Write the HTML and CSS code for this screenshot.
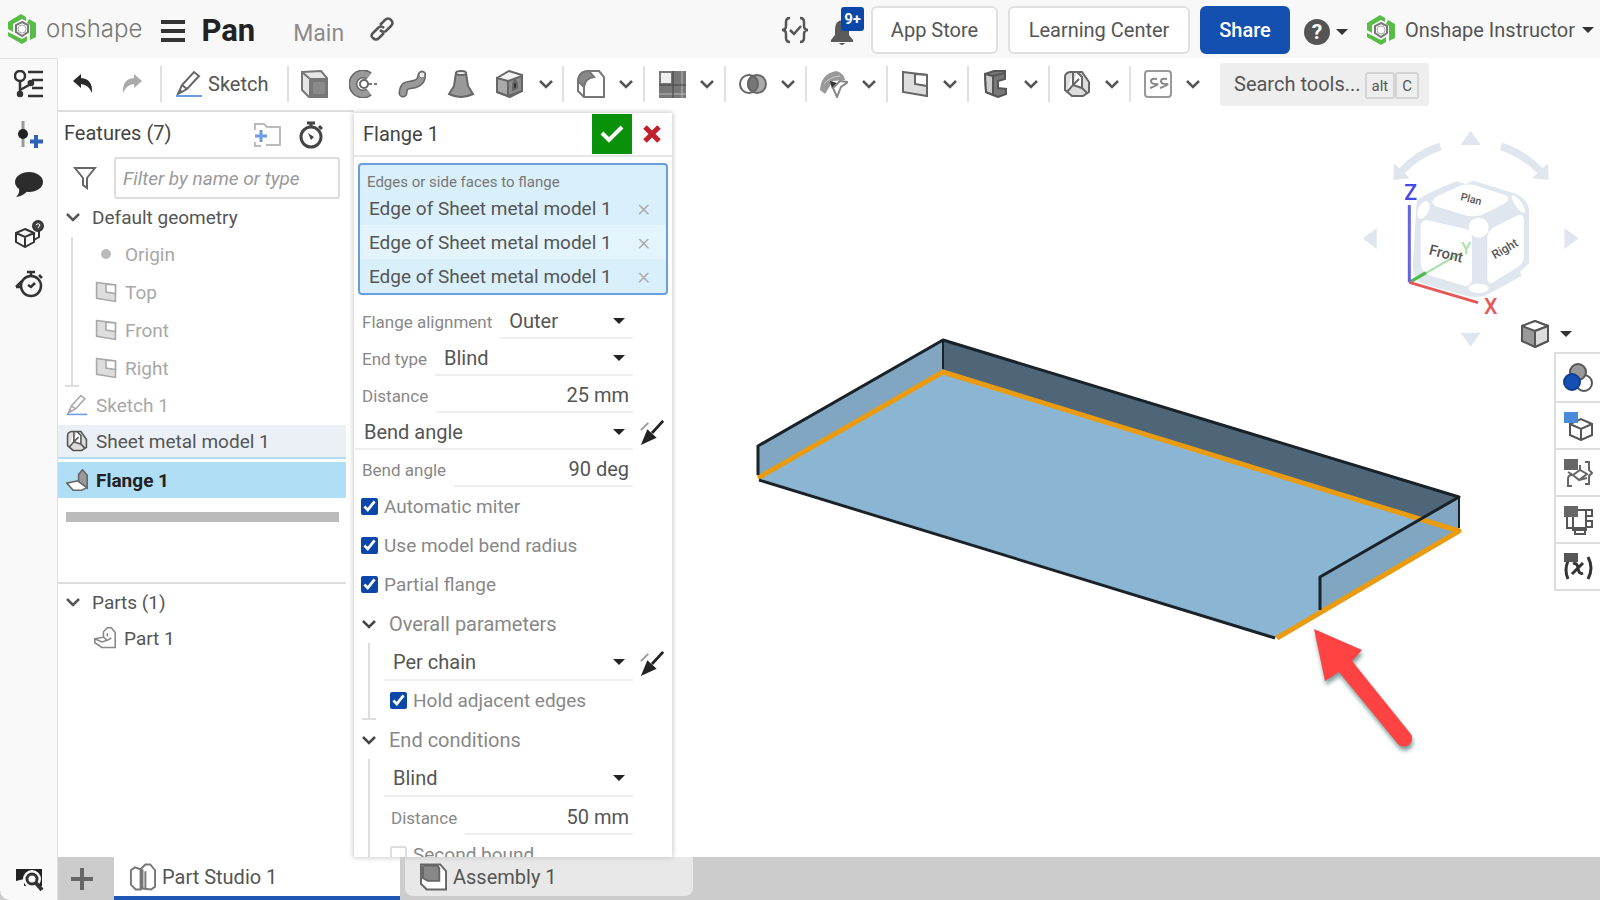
FILE: index.html
```html
<!DOCTYPE html>
<html lang="en">
	<head>
		<meta charset="utf-8">
		<title>Pan - Onshape</title>
		<link rel="stylesheet" href="styles.css">
	</head>
	<body>
		<!--shared icons-->
		<svg class="defs" width="0" height="0">
			<symbol id="logo" viewBox="0 0 28 30">
				<path d="M0 8L13 0L18 3V7L14 5L5 10V18L0 15Z M21 5L28 9V23L22 26V11L19 9Z M0 18L14 25L19 22V27L14 30L0 22Z" fill="#58bd47"/>
				<path d="M14 8L20 11V18L14 22L8 18V11Z" fill="#fff" stroke="#777" stroke-width="2"/>
				<circle cx="14" cy="15" r="4" fill="#fff" stroke="#aaa" stroke-width="1"/>
			</symbol>
			<symbol id="chevron" viewBox="0 0 16 10">
				<path d="M2 2L8 8L14 2" fill="none" stroke="currentColor" stroke-width="2.500"/>
			</symbol>
			<symbol id="plane" viewBox="0 0 28 28">
				<path d="M2 2L26 5V26L2 22Z" fill="#ddd" stroke="currentColor" stroke-width="2"/>
				<path d="M14 4V14L26 16V5Z" fill="#fff" stroke="currentColor" stroke-width="2"/>
			</symbol>
			<symbol id="pencil" viewBox="0 0 28 28">
				<path d="M3 24L7 15L19 2L24 6L12 19Z M7 15L12 19" fill="#fff" stroke="currentColor" stroke-width="2"/>
				<path d="M3 24L5 19L8 22Z" fill="currentColor"/>
				<path d="M1 26H27" stroke="#6c9be0" stroke-width="2"/>
			</symbol>
			<symbol id="sheet" viewBox="0 0 28 28">
				<path d="M2 7Q2 3 7 2L19 2L26 12V22L20 26H9L2 20Z" fill="#ddd" stroke="currentColor" stroke-width="2"/>
				<path d="M10 2V15L4 22M10 15L19 18V7L14 2M19 18L24 23M10 15L16 9" fill="#fff" stroke="currentColor" stroke-width="2"/>
			</symbol>
			<symbol id="stopwatch" viewBox="0 0 26 28">
				<circle cx="13" cy="16" r="10" fill="none" stroke="currentColor" stroke-width="3"/>
				<path d="M9 2H17M13 2V6M21 5L24 8" stroke="currentColor" stroke-width="3"/>
				<path d="M10 12L16 16L13 19Z" fill="currentColor"/>
			</symbol>
			<symbol id="flip" viewBox="0 0 28 28">
				<path d="M26 1L14 14" stroke="#222" stroke-width="3"/>
				<path d="M2 11L10 3" stroke="#999" stroke-width="2"/>
				<path d="M2 27L9 10L19 19Z" fill="#222"/>
			</symbol>
		</svg>

		<!--top bar-->
		<header class="topbar">
			<a href="#" class="brand"><svg class="logo"><use href="#logo"/></svg><span>onshape</span></a>
			<button type="button" class="plain menu" aria-label="Menu"><i></i><i></i><i></i></button>
			<h1>Pan</h1>
			<a href="#" class="branch">Main</a>
			<button type="button" class="plain" aria-label="Copy link">
				<svg width="24" height="24" viewBox="0 0 24 24" fill="none" stroke="#555" stroke-width="2.500"><path d="M10 8L15 3Q18 0 21 3Q24 6 21 9L16 14Q13 16 10 13M14 11Q11 8 8 11L3 16Q0 19 3 21Q6 24 9 21L14 16"/></svg>
			</button>
			<div class="account">
				<button type="button" class="plain" aria-label="Versions">
					<svg width="28" height="28" viewBox="0 0 28 28" fill="none" stroke="#555" stroke-width="2.500"><path d="M9 2Q5 2 5 6V10Q5 14 1 14Q5 14 5 18V22Q5 26 9 26M19 2Q23 2 23 6V10Q23 14 27 14Q23 14 23 18V22Q23 26 19 26M9 14L13 18L20 10"/></svg>
				</button>
				<button type="button" class="plain bell" aria-label="Notifications">
					<svg width="24" height="26" viewBox="0 0 24 26" fill="#5a5a5a"><path d="M12 1Q19 2 19 10V16L23 21V23H1V21L5 16V10Q5 2 12 1Z M9 24H15Q12 28 9 24Z"/></svg>
					<span class="badge">9+</span>
				</button>
				<button type="button" class="btn store">App Store</button>
				<button type="button" class="btn learn">Learning Center</button>
				<button type="button" class="btn share">Share</button>
				<button type="button" class="plain help" aria-label="Help"><span>?</span><i class="caret"></i></button>
				<button type="button" class="plain user"><svg class="logo"><use href="#logo"/></svg>Onshape Instructor<i class="caret"></i></button>
			</div>
		</header>

		<div class="app">
			<!--left rail-->
			<nav class="rail">
				<button type="button" class="plain" aria-label="Feature list">
					<svg width="30" height="28" viewBox="0 0 30 28" fill="none" stroke="#333" stroke-width="2.500"><circle cx="6" cy="6" r="5"/><path d="M6 11V25M6 20L15 15V11M14 2H29M18 10H29M18 18H29M14 26H29"/><circle cx="6" cy="24" r="2" fill="#333"/><circle cx="17" cy="13" r="2" fill="#333"/></svg>
				</button>
				<button type="button" class="plain" aria-label="Add part">
					<svg width="30" height="28" viewBox="0 0 30 28"><path d="M9 1V27" stroke="#999" stroke-width="3"/><circle cx="9" cy="14" r="5" fill="#222"/><path d="M22 15V28M16 21.500H29" stroke="#2d63bd" stroke-width="4"/></svg>
				</button>
				<button type="button" class="plain" aria-label="Comments">
					<svg width="30" height="28" viewBox="0 0 30 28" fill="#2c2c2c"><ellipse cx="15" cy="12" rx="14" ry="10"/><path d="M5 18Q6 24 2 27Q10 26 14 20Z"/></svg>
				</button>
				<button type="button" class="plain" aria-label="Explode">
					<svg width="30" height="28" viewBox="0 0 30 28" fill="none" stroke="#333" stroke-width="2"><path d="M11 9L20 13V22L11 27L2 22V13Z M2 13L11 17L20 13M11 17V27M20 20L25 17V10"/><circle cx="24" cy="6" r="5" fill="#444"/><path d="M22 5Q24 2 26 5L24 8" stroke="#fff" stroke-width="1"/></svg>
				</button>
				<button type="button" class="plain" aria-label="History">
					<svg width="30" height="28" viewBox="0 0 30 28" fill="none" stroke="#333" stroke-width="2.500"><circle cx="17" cy="16" r="10"/><path d="M13 2H21M17 2V6M25 5L28 8M14 15L17 17L21 13M2 17L8 11M2 17H8"/></svg>
				</button>
				<button type="button" class="plain last" aria-label="Search tabs">
					<svg width="30" height="28" viewBox="0 0 30 28"><path d="M2 5H28V22H2Z" fill="#222"/><circle cx="18" cy="15" r="9" fill="#f9f9f9"/><path d="M2 17L10 15V24H1Z" fill="#f9f9f9"/><circle cx="18" cy="15" r="5" fill="#fff" stroke="#333" stroke-width="3"/><path d="M22 19L28 26" stroke="#333" stroke-width="4"/></svg>
				</button>
			</nav>

			<main class="main">
				<!--toolbar-->
				<div class="toolbar">
					<div class="tools history">
						<button type="button" class="plain" aria-label="Undo"><svg width="22" height="22" viewBox="0 0 22 22"><path d="M1 8L9 1V5Q21 6 20 20Q17 12 9 11V15Z" fill="#2a2a2a"/></svg></button>
						<button type="button" class="plain" aria-label="Redo"><svg width="22" height="22" viewBox="0 0 22 22"><path d="M21 8L13 1V5Q1 6 2 20Q5 12 13 11V15Z" fill="#aaa"/></svg></button>
					</div>
					<div class="tools sketch">
						<button type="button" class="plain"><svg><use href="#pencil"/></svg>Sketch</button>
					</div>
					<div class="tools solids">
						<button type="button" class="plain" aria-label="Extrude"><svg viewBox="0 0 28 28" stroke="#777" stroke-width="2"><path d="M2 2L21 1L27 8V27H9L2 20Z" fill="#e6e6e6"/><path d="M2 2L10 9V27M10 9H27" fill="none"/><path d="M12 11H26V25H12Z" fill="#8a8a8a"/></svg></button>
						<button type="button" class="plain" aria-label="Revolve"><svg viewBox="0 0 28 28"><path d="M20 6A10 10 0 1 0 20 22" fill="none" stroke="#666" stroke-width="9"/><path d="M20 6A10 10 0 1 0 20 22" fill="none" stroke="#999" stroke-width="6"/><path d="M18 14H28" stroke="#777" stroke-width="2" stroke-dasharray="5 2"/><circle cx="15" cy="14" r="4" fill="#fff" stroke="#666" stroke-width="2"/></svg></button>
						<button type="button" class="plain" aria-label="Sweep"><svg viewBox="0 0 28 28" fill="none" stroke-linecap="round"><path d="M5 23C6 13 11 16 17 14S23 9 24 5" stroke="#666" stroke-width="9"/><path d="M5 23C6 13 11 16 17 14S23 9 24 5" stroke="#999" stroke-width="6"/><circle cx="24" cy="5" r="3" fill="#eee" stroke="#777"/></svg></button>
						<button type="button" class="plain" aria-label="Loft"><svg viewBox="0 0 28 28" stroke="#666" stroke-width="2"><path d="M9 3L7 16L2 24Q14 30 26 24L21 16L19 3Z" fill="#999"/><ellipse cx="14" cy="3" rx="5" ry="2" fill="#eee"/></svg></button>
						<button type="button" class="plain" aria-label="Shell"><svg viewBox="0 0 28 28" stroke="#666" stroke-width="2"><path d="M1 8L13 1L26 5V21L14 27L1 22Z" fill="#f4f4f4"/><path d="M1 8L12 11V26L1 22Z" fill="#aaa"/><path d="M12 11L26 6V21L12 26Z" fill="#8c8c8c"/><path d="M17 20V14L19 10L21 14V18Z" fill="#333"/></svg></button>
						<button type="button" class="plain" aria-label="More solid tools"><svg class="chev"><use href="#chevron"/></svg></button>
					</div>
					<div class="tools">
						<button type="button" class="plain" aria-label="Fillet"><svg viewBox="0 0 28 28" stroke="#777" stroke-width="2"><path d="M1 11Q2 1 12 1H22L27 7V27H7L1 21Z" fill="#fff"/><path d="M1 11Q2 1 12 1L17 7Q8 8 7 17Z" fill="#888"/><path d="M7 17V27" fill="none"/></svg></button>
						<button type="button" class="plain" aria-label="More fillet tools"><svg class="chev"><use href="#chevron"/></svg></button>
					</div>
					<div class="tools">
						<button type="button" class="plain" aria-label="Pattern"><svg viewBox="0 0 28 28"><path d="M1 1H28V28H1Z" fill="#777"/><path d="M3 3H13V13H3Z" fill="#eee"/><path d="M1 24H28M24 1V28" stroke="#bbb" stroke-width="1"/><path d="M15 1V28M1 15H28" stroke="#444" stroke-width="1"/></svg></button>
						<button type="button" class="plain" aria-label="More pattern tools"><svg class="chev"><use href="#chevron"/></svg></button>
					</div>
					<div class="tools">
						<button type="button" class="plain" aria-label="Boolean"><svg viewBox="0 0 28 28" stroke="#666" stroke-width="2"><circle cx="10" cy="14" r="9" fill="#fff"/><circle cx="18" cy="14" r="9" fill="#aaa"/><path d="M14 6A9 9 0 0 1 14 22A9 9 0 0 1 14 6Z" fill="#777"/></svg></button>
						<button type="button" class="plain" aria-label="More boolean tools"><svg class="chev"><use href="#chevron"/></svg></button>
					</div>
					<div class="tools">
						<button type="button" class="plain" aria-label="Surface"><svg viewBox="0 0 28 28"><path d="M0 20Q1 4 16 1Q24 3 25 10L13 11L5 24Z" fill="#999"/><path d="M4 14Q9 7 20 6" fill="none" stroke="#ccc"/><path d="M10 11L17 13L12 19Z" fill="#333"/><path d="M13 18L20 11L28 12L21 17L17 27Z" fill="#fff" stroke="#888" stroke-width="2"/></svg></button>
						<button type="button" class="plain" aria-label="More surface tools"><svg class="chev"><use href="#chevron"/></svg></button>
					</div>
					<div class="tools">
						<button type="button" class="plain" aria-label="Plane"><svg><use href="#plane"/></svg></button>
						<button type="button" class="plain" aria-label="More plane tools"><svg class="chev"><use href="#chevron"/></svg></button>
					</div>
					<div class="tools">
						<button type="button" class="plain" aria-label="Frame"><svg viewBox="0 0 28 28" stroke="#555" stroke-width="2"><path d="M3 4L12 1H23V9L16 11V18L24 19V24L16 27L4 22Z" fill="#777"/><path d="M3 4L11 6V25L4 22Z" fill="#ccc"/><path d="M11 6L23 3" fill="none"/></svg></button>
						<button type="button" class="plain" aria-label="More frame tools"><svg class="chev"><use href="#chevron"/></svg></button>
					</div>
					<div class="tools">
						<button type="button" class="plain" aria-label="Sheet metal"><svg><use href="#sheet"/></svg></button>
						<button type="button" class="plain" aria-label="More sheet metal tools"><svg class="chev"><use href="#chevron"/></svg></button>
					</div>
					<div class="tools">
						<button type="button" class="plain" aria-label="Custom features"><svg viewBox="0 0 28 28" fill="none" stroke="#999" stroke-width="2"><rect x="1" y="1" width="26" height="26" rx="3"/><path d="M13 9Q7 8 7 11T12 14T6 18M23 9Q17 8 17 11T22 14T16 18" stroke="#888"/></svg></button>
						<button type="button" class="plain" aria-label="More custom features"><svg class="chev"><use href="#chevron"/></svg></button>
					</div>
					<button type="button" class="search">Search tools... <kbd>alt</kbd><kbd>C</kbd></button>
				</div>

				<div class="workspace">
					<!--feature list-->
					<section class="features">
						<div class="panel-head">
							<h2>Features (7)</h2>
							<button type="button" class="plain" aria-label="Add folder"><svg width="28" height="26" viewBox="0 0 28 26" fill="none"><path d="M2 8V2H11L14 5H27V23H13M2 20V24H8" stroke="#bbb" stroke-width="2"/><path d="M8 8V20M2 14H14" stroke="#6c9be0" stroke-width="3"/></svg></button>
							<button type="button" class="plain" aria-label="Timing"><svg width="26" height="28"><use href="#stopwatch"/></svg></button>
						</div>
						<div class="filter">
							<svg width="24" height="24" viewBox="0 0 24 24" fill="none" stroke="#666" stroke-width="2"><path d="M2 2H22L14 12V22L10 19V12Z"/></svg>
							<input type="text" aria-label="Filter features" placeholder="Filter by name or type">
						</div>
						<div class="row group"><svg class="chev"><use href="#chevron"/></svg>Default geometry</div>
						<ul class="tree">
							<li class="row"><i class="dot"></i>Origin</li>
							<li class="row"><svg><use href="#plane"/></svg>Top</li>
							<li class="row"><svg><use href="#plane"/></svg>Front</li>
							<li class="row"><svg><use href="#plane"/></svg>Right</li>
						</ul>
						<div class="row item muted"><svg><use href="#pencil"/></svg>Sketch 1</div>
						<div class="row item parent"><svg><use href="#sheet"/></svg>Sheet metal model 1</div>
						<div class="row item selected"><svg viewBox="0 0 28 28" stroke="#666" stroke-width="2"><path d="M1 18L15 15L26 19V24L20 27H9Z" fill="#fff"/><path d="M16 7L21 1L27 8V24L16 16Z" fill="#999"/></svg>Flange 1</div>
						<div class="rollback"></div>
						<div class="parts">
							<div class="row group"><svg class="chev"><use href="#chevron"/></svg>Parts (1)</div>
							<div class="row part"><svg viewBox="0 0 28 28" fill="#fff" stroke="#888" stroke-width="2"><path d="M1 15L12 13V6L17 1H22L27 7V26H10L1 20Z"/><path d="M12 13L17 17L22 14M17 8V12M1 15L10 19L17 17" fill="none"/></svg>Part 1</div>
						</div>
					</section>

					<!--flange dialog-->
					<form class="dialog">
						<div class="dialog-head">
							<h2>Flange 1</h2>
							<button type="button" class="accept" aria-label="Accept"><svg width="24" height="20" viewBox="0 0 24 20" fill="none" stroke="#fff" stroke-width="4"><path d="M2 9L9 16L22 3"/></svg></button>
							<button type="button" class="cancel" aria-label="Cancel"><svg width="18" height="18" viewBox="0 0 18 18" stroke="#c21f2c" stroke-width="5"><path d="M2 2L16 16M16 2L2 16"/></svg></button>
						</div>
						<div class="picked">
							<p>Edges or side faces to flange</p>
							<ul>
								<li>Edge of Sheet metal model 1<button type="button" class="plain" aria-label="Remove edge 1">&times;</button></li>
								<li>Edge of Sheet metal model 1<button type="button" class="plain" aria-label="Remove edge 2">&times;</button></li>
								<li>Edge of Sheet metal model 1<button type="button" class="plain" aria-label="Remove edge 3">&times;</button></li>
							</ul>
						</div>
						<div class="field">
							<label for="alignment">Flange alignment</label>
							<span class="select"><select id="alignment"><option>Outer</option><option>Inner</option></select></span>
						</div>
						<div class="field">
							<label for="endtype">End type</label>
							<span class="select"><select id="endtype"><option>Blind</option></select></span>
						</div>
						<div class="field">
							<label for="distance">Distance</label>
							<input type="text" id="distance" value="25 mm">
						</div>
						<div class="field wide">
							<span class="select"><select aria-label="Angle control"><option>Bend angle</option></select></span>
							<button type="button" class="plain flip" aria-label="Flip direction"><svg><use href="#flip"/></svg></button>
						</div>
						<div class="field">
							<label for="angle">Bend angle</label>
							<input type="text" id="angle" value="90 deg">
						</div>
						<label class="check"><input type="checkbox" checked>Automatic miter</label>
						<label class="check"><input type="checkbox" checked>Use model bend radius</label>
						<label class="check"><input type="checkbox" checked>Partial flange</label>
						<div class="section"><svg class="chev"><use href="#chevron"/></svg>Overall parameters</div>
						<div class="nested">
							<div class="field wide">
								<span class="select"><select aria-label="Parameter scope"><option>Per chain</option></select></span>
								<button type="button" class="plain flip" aria-label="Flip chain"><svg><use href="#flip"/></svg></button>
							</div>
							<label class="check"><input type="checkbox" checked>Hold adjacent edges</label>
						</div>
						<div class="section"><svg class="chev"><use href="#chevron"/></svg>End conditions</div>
						<div class="nested">
							<div class="field wide">
								<span class="select"><select aria-label="End condition"><option>Blind</option></select></span>
							</div>
							<div class="field">
								<label for="distance2">Distance</label>
								<input type="text" id="distance2" value="50 mm">
							</div>
							<label class="check"><input type="checkbox">Second bound</label>
						</div>
					</form>

					<!--3d view-->
					<section class="view">
						<svg class="model" viewBox="672 110 928 747">
							<path d="M758 478L943 372L1459 531L1277 638Z" fill="#8bb6d3"/>
							<path d="M758 446L943 340V372L758 478Z" fill="#80a6c1"/>
							<path d="M943 340L1459 497V531L943 372Z" fill="#4e6677"/>
							<path d="M1320 577L1459 497V531L1320 611Z" fill="#80a6c1"/>
							<path d="M1320 577L1421 519L1459 531L1320 611Z" fill="#80a6c1"/>
							<path d="M758 478L943 372L1459 531L1277 638" fill="none" stroke="#e99b12" stroke-width="5" stroke-linejoin="round"/>
							<g fill="none" stroke="#192229" stroke-width="3" stroke-linejoin="round">
								<path d="M758 475V446L943 340L1459 497L1320 577V610"/>
								<path d="M759 480L1275 638"/>
								<path d="M943 340V369M1459 497V528" stroke-width="2"/>
							</g>
							<path class="pointer" d="M1314 629L1362 650L1352 661L1410 733A8 8 0 0 1 1398 744L1339 672L1325 681Z" fill="#ff4242"/>
						</svg>
						<svg class="cube" viewBox="0 0 750 720">
							<g fill="#dfe6ee">
								<path d="M362 32L392 75H332Z M362 680L332 638H392Z M38 355L80 325V387Z M686 355L643 325V387Z"/>
								<path d="M268 68L275 91Q210 112 164 160L180 175L130 180L132 130L148 145Q200 88 268 68Z M456 68L450 91Q515 112 562 160L546 175L596 180L594 130L578 145Q525 88 456 68Z"/>
								<path d="M200 245Q205 230 320 184L348 192L370 182L500 222Q535 240 537 270V430L510 455L515 468L410 525Q385 535 350 528L215 490Q190 475 188 440Z"/>
							</g>
							<g fill="#fff">
								<path d="M255 232L330 197Q350 190 375 196L465 225Q485 235 465 250L395 285Q375 292 350 287L255 258Q240 245 255 232Z"/>
								<path d="M230 300L350 328Q365 335 366 355V475Q365 500 345 498L235 465Q215 455 212 430V320Q215 298 230 300Z"/>
								<path d="M435 320L505 285Q520 280 522 300V410Q520 430 505 440L430 487Q412 495 412 475V350Q415 330 435 320Z"/>
								<circle cx="386" cy="323" r="30"/><ellipse cx="386" cy="505" rx="30" ry="14"/>
								<ellipse cx="220" cy="270" rx="16" ry="28" transform="rotate(25 220 270)"/>
								<ellipse cx="505" cy="252" rx="10" ry="32" transform="rotate(-35 505 252)"/>
							</g>
							<path d="M180 487L330 400" stroke="#a8dfa8" stroke-width="6"/>
							<path d="M178 487L228 458" stroke="#4dbb4d" stroke-width="10"/>
							<path d="M178 255V487" stroke="#6565df" stroke-width="9"/>
							<path d="M178 487L384 548" stroke="#e45858" stroke-width="9"/>
							<text x="163" y="240" class="axis z">Z</text>
							<text x="402" y="582" class="axis x">X</text>
							<text x="334" y="402" class="axis y">Y</text>
							<text x="235" y="403" class="face" transform="rotate(14 235 403)">Front</text>
							<text x="434" y="418" class="face side-face" transform="rotate(-30 434 418)">Right</text>
							<text x="330" y="240" class="face small" transform="rotate(14 330 240)">Plan</text>
						</svg>
						<button type="button" class="plain shade" aria-label="Shading">
							<svg width="28" height="28" viewBox="0 0 28 28" stroke="#555" stroke-width="2"><path d="M1 6L14 1L27 6V21L14 27L1 21Z" fill="#999"/><path d="M1 6L14 1L27 6L14 11Z" fill="#fff"/><path d="M14 11L27 6V21L14 27Z" fill="#ddd"/></svg>
							<i class="caret"></i>
						</button>
						<div class="side">
							<button type="button" aria-label="Appearance"><svg viewBox="0 0 30 30" stroke="#555" stroke-width="2"><circle cx="21" cy="20" r="8" fill="#fff"/><circle cx="15" cy="9" r="8" fill="#999"/><circle cx="9" cy="19" r="8" fill="#1450b4" stroke="#123f8e"/></svg></button>
							<button type="button" aria-label="Configuration"><svg viewBox="0 0 30 30" fill="#fff" stroke="#555" stroke-width="2"><path d="M7 13L18 8L29 13V24L18 29L7 24Z M7 13L18 18L29 13M18 18V29"/><path d="M1 1H15V12H1Z" fill="#4a8adb" stroke="none"/></svg></button>
							<button type="button" aria-label="Custom properties"><svg viewBox="0 0 30 30" fill="none" stroke="#666" stroke-width="2"><path d="M9 17Q5 17 5 21V28H9M22 4H26V12L29 15L26 18V26H22M10 17L17 12L24 16L16 22ZM17 12V7M10 17L5 14M16 22L24 20"/><path d="M1 1H15V12H1Z" fill="#666" stroke="none"/></svg></button>
							<button type="button" aria-label="Sheet metal table"><svg viewBox="0 0 30 30" fill="none" stroke="#555" stroke-width="2"><path d="M10 5H23V25H10ZM4 12V23H23M12 25V29H22V25M23 5H29V11H23M23 16H29V22H23"/><path d="M1 1H15V12H1Z" fill="#666" stroke="none"/></svg></button>
							<button type="button" aria-label="Variables"><svg viewBox="0 0 30 30" fill="none" stroke="#333" stroke-width="3"><path d="M5 9Q1 18 5 27M25 5Q31 16 25 27"/><path d="M10 12Q14 10 15 16Q16 23 20 21M20 11L9 22"/><path d="M1 1H15V10H1Z" fill="#555" stroke="none"/></svg></button>
						</div>
					</section>
				</div>

				<!--document tabs-->
				<nav class="tabs">
					<button type="button" class="plain add" aria-label="Add tab"><svg width="24" height="24" viewBox="0 0 24 24" stroke="#666" stroke-width="4"><path d="M12 1V23M1 12H23"/></svg></button>
					<a href="#" class="tab active"><svg viewBox="0 0 28 28" fill="#fff" stroke="#777" stroke-width="2"><path d="M2 7L6 4L12 6V27H7L2 22Z M12 6L17 1H22L27 7V24L23 27L14 26V7Z M17 8V26"/></svg>Part Studio 1</a>
					<a href="#" class="tab"><svg viewBox="0 0 28 28" fill="#fff" stroke="#666" stroke-width="2"><path d="M1 1H21L27 8V27H7L1 21Z"/><path d="M3 3L6 2H18L20 5V18H8L3 15Z" fill="#888"/></svg>Assembly 1</a>
				</nav>
			</main>
		</div>
	</body>
</html>
```
FILE: styles.css
```css
*{
	box-sizing:border-box;
}
body{
	margin:0;
	height:100vh;
	display:flex;
	flex-direction:column;
	overflow:hidden;
	background:#fff;
	color:#555;
	font-family:Roboto, "Liberation Sans", sans-serif;
	font-size:20px;
}
h1, h2, p, ul{
	margin:0;
	padding:0;
	font-weight:normal;
}
ul{
	list-style:none;
}
a{
	color:inherit;
	text-decoration:none;
}
button, input, select{
	font:inherit;
	color:inherit;
}
svg{
	flex:none;
}
.defs{
	position:absolute;
}
.plain{
	display:flex;
	align-items:center;
	flex:none;
	padding:0;
	border:0;
	background:none;
}
.caret{
	border:6px solid transparent;
	border-top-color:#333;
	border-bottom:0;
}
.chev{
	width:16px;
	height:10px;
}

/* top bar */
.topbar{
	flex:none;
	display:flex;
	align-items:center;
	height:58px;
	padding:0 6px 0 8px;
	background:#f8f8f8;
}
.logo{
	width:28px;
	height:30px;
}
.brand{
	display:flex;
	align-items:center;
	gap:10px;
	color:#777;
	font:300 24px/30px Inter, sans-serif;
}
.menu{
	flex-direction:column;
	gap:5px;
	width:24px;
	margin:4px 16px 0 19px;
}
.menu i{
	width:24px;
	height:4px;
	background:#333;
}
h1{
	margin-top:2px;
	font-size:31px;
	font-weight:bold;
	color:#222;
}
.branch{
	margin:8px 26px 0 38px;
	font-size:23px;
	color:#8c8c8c;
}
.account{
	display:flex;
	align-items:center;
	margin-left:auto;
	padding-top:2px;
}
.bell{
	position:relative;
	margin:4px 17px 0 21px;
}
.badge{
	position:absolute;
	left:11px;
	top:-12px;
	width:23px;
	height:24px;
	border-radius:3px;
	background:#0b47a9;
	color:#fff;
	font-size:15px;
	font-weight:bold;
	line-height:24px;
	text-align:center;
}
.btn{
	height:48px;
	padding:0;
	border:2px solid #e0e0e0;
	border-radius:6px;
	background:#fff;
}
.store{
	width:127px;
}
.learn{
	width:182px;
	margin:0 10px;
}
.share{
	width:90px;
	border-color:#1450b0;
	background:#1450b0;
	color:#fff;
	font-weight:500;
}
.help{
	gap:6px;
	margin:4px 19px 0 14px;
}
.help span{
	width:26px;
	height:26px;
	border-radius:50%;
	background:#555;
	color:#fff;
	font-size:21px;
	font-weight:bold;
	line-height:26px;
}
.user{
	gap:10px;
}
.user .caret{
	margin-left:-3px;
}

/* left rail */
.app{
	flex:1;
	display:flex;
	min-height:0;
	background:#ccc;
}
.rail{
	flex:none;
	display:flex;
	flex-direction:column;
	align-items:center;
	gap:22px;
	width:58px;
	padding:11px 0 8px;
	border-top:1px solid #e0e0e0;
	border-right:1px solid #e0e0e0;
	border-bottom-left-radius:10px;
	background:#f9f9f9;
}
.rail .last{
	margin-top:auto;
}
.main{
	flex:1;
	display:flex;
	flex-direction:column;
	min-width:0;
	background:#fff;
}

/* toolbar */
.toolbar{
	flex:none;
	display:flex;
	align-items:center;
	height:52px;
	padding-left:14px;
}
.tools{
	display:flex;
	align-items:center;
	justify-content:space-between;
	width:81px;
	height:36px;
	padding:0 9px 0 13px;
	border-left:2px solid #e0e0e0;
}
.tools svg{
	width:28px;
	height:28px;
	color:#666;
}
.tools .chev{
	width:16px;
	height:10px;
	color:#555;
}
.history{
	width:88px;
	padding:0 17px 0 0;
	border:0;
}
.history svg{
	width:22px;
	height:22px;
}
.sketch{
	width:127px;
}
.sketch button{
	gap:5px;
}
.solids{
	justify-content:flex-start;
	gap:21px;
	width:275px;
	padding:0 0 0 11px;
}
.solids button:last-child{
	margin-left:-7px;
}
.search{
	display:flex;
	align-items:center;
	width:209px;
	height:43px;
	margin-left:10px;
	padding:0 14px;
	border:0;
	border-radius:3px;
	background:#eee;
	white-space:nowrap;
}
.search kbd{
	height:27px;
	margin-top:3px;
	padding:0 5px;
	border:2px solid #d4d4d4;
	border-radius:3px;
	font:15px/24px Roboto, sans-serif;
}
.search kbd:first-of-type{
	margin-left:4px;
}

/* feature list */
.workspace{
	flex:1;
	display:flex;
	min-height:0;
}
.features{
	flex:none;
	width:296px;
	border-top:2px solid #ddd;
	padding-right:8px;
	font-size:19px;
}
.panel-head{
	display:flex;
	align-items:center;
	gap:17px;
	height:45px;
	padding:0 22px 0 6px;
	color:#444;
}
h2{
	flex:1;
	font-size:20px;
}
.panel-head h2{
	padding-bottom:3px;
}
.filter{
	display:flex;
	align-items:center;
	gap:17px;
	height:42px;
	padding:0 6px 0 15px;
}
.filter input{
	flex:1;
	min-width:0;
	height:42px;
	padding:0 7px;
	border:2px solid #ddd;
	border-radius:3px;
	font-style:italic;
}
.filter input::placeholder{
	color:#999;
}
.row{
	display:flex;
	align-items:center;
	height:36px;
	gap:8px;
}
.row svg{
	width:22px;
	height:22px;
}
.row.group{
	gap:11px;
	padding-left:7px;
}
.row .chev{
	width:16px;
	height:10px;
}
.tree{
	position:relative;
	padding-left:37px;
	color:#a8a8a8;
}
.tree .row{
	height:38px;
}
.tree:before{
	content:"";
	position:absolute;
	left:13px;
	top:2px;
	bottom:0;
	border-left:2px solid #ddd;
}
.tree:after{
	content:"";
	position:absolute;
	left:7px;
	bottom:0;
	width:14px;
	border-bottom:2px solid #ddd;
}
.dot{
	width:10px;
	height:10px;
	margin:0 6px;
	border-radius:50%;
	background:#bbb;
}
.item{
	padding-left:8px;
}
.muted{
	color:#a8a8a8;
}
.parent{
	height:34px;
	margin-top:2px;
	border-bottom:2px solid #b0dff5;
	background:#eaf0f5;
}
.selected{
	height:36px;
	margin-top:3px;
	background:#b0dff5;
	color:#222;
	font-weight:bold;
}
.rollback{
	height:10px;
	margin:14px 7px 60px 8px;
	background:#bbb;
}
.parts{
	border-top:2px solid #ddd;
}
.part{
	padding-left:36px;
}

/* dialog */
.dialog{
	position:relative;
	flex:none;
	width:318px;
	margin-top:3px;
	overflow:hidden;
	box-shadow:0 0 5px 1px #ccc;
	background:#fff;
}
.dialog-head{
	display:flex;
	align-items:center;
	height:44px;
	padding-left:9px;
	border-bottom:2px solid #e6e6e6;
	color:#444;
}
.accept, .cancel{
	display:flex;
	align-items:center;
	justify-content:center;
	width:40px;
	height:40px;
	padding:0;
	border:0;
	background:#0a910a;
}
.cancel{
	background:none;
}
.picked{
	margin:6px 4px 7px;
	border:2px solid #6a9ddd;
	border-radius:4px;
	background:#d9f0fa;
	font-size:19px;
}
.picked p{
	padding:8px 7px 0;
	font-size:15px;
	line-height:18px;
	color:#777;
}
.picked li{
	display:flex;
	align-items:center;
	justify-content:space-between;
	height:34px;
	padding:0 16px 0 9px;
}
.picked li:nth-child(2){
	background:#e3f4fc;
}
.picked button{
	font-size:24px;
	font-weight:300;
	line-height:20px;
	color:#aaa;
}
.field{
	display:flex;
	align-items:stretch;
	gap:8px;
	height:37px;
	padding:3px 39px 0 8px;
}
.field label{
	display:flex;
	align-items:center;
	font-size:17px;
	color:#888;
}
.field input, .select{
	flex:1;
	min-width:0;
	padding:0 4px;
	border:0;
	border-bottom:2px solid #eee;
	border-radius:0;
	background:none;
}
.field input{
	text-align:right;
}
.select{
	position:relative;
	padding:0;
}
.select:after{
	content:"";
	position:absolute;
	right:8px;
	top:13px;
	border:6px solid transparent;
	border-top-color:#222;
	border-bottom:0;
}
.select select{
	width:100%;
	height:32px;
	padding:0 9px;
	border:0;
	background:none;
	appearance:none;
}
.wide{
	padding:3px 5px 0 1px;
}
.wide .select{
	flex:none;
	width:278px;
}
.flip{
	margin:0 0 0 -2px;
}
.flip svg{
	width:26px;
	height:28px;
}
.check{
	display:flex;
	align-items:center;
	gap:6px;
	height:39px;
	padding-left:7px;
	font-size:19px;
	color:#888;
}
.check input{
	flex:none;
	width:17px;
	height:17px;
	margin:0;
	accent-color:#0b47a9;
}
.check input:not(:checked){
	appearance:none;
	border:2px solid #ddd;
	border-radius:3px;
}
.section{
	display:flex;
	align-items:center;
	gap:12px;
	height:39px;
	padding-left:7px;
	color:#888;
}
.section .chev{
	color:#444;
}
.nested{
	position:relative;
	padding-left:29px;
}
.nested:before{
	content:"";
	position:absolute;
	left:8px;
	top:0;
	bottom:0;
	width:14px;
	border-bottom:2px solid #ddd;
	background:linear-gradient(#ddd, #ddd) center / 2px 100% no-repeat;
}
.nested .field{
	height:38px;
}
.nested .wide .select{
	width:249px;
}

/* 3d view */
.view{
	position:relative;
	flex:1;
	min-width:0;
}
.model{
	display:block;
	width:100%;
	height:100%;
}
.pointer{
	filter:drop-shadow(1px 4px 2px rgba(0, 60, 60, 0.5));
}
.cube{
	position:absolute;
	right:0;
	top:10px;
	width:250px;
	height:240px;
}
.axis{
	font-size:64px;
	font-weight:500;
}
.z{
	fill:#4646e8;
}
.x{
	fill:#e45858;
}
.y{
	font-size:48px;
	fill:#a8dfa8;
}
.face{
	font-size:44px;
	font-weight:500;
	fill:#555;
}
.side-face{
	font-size:36px;
}
.small{
	font-size:32px;
}
.shade{
	position:absolute;
	right:28px;
	top:210px;
	gap:11px;
}
.side{
	position:absolute;
	right:0;
	top:242px;
	display:flex;
	flex-direction:column;
	width:46px;
	border:2px solid #ddd;
	border-right:0;
	background:#fff;
}
.side button{
	display:flex;
	align-items:center;
	height:47px;
	padding:0 7px;
	border:0;
	border-top:2px solid #ddd;
	background:none;
}
.side button:first-child{
	border-top:0;
}
.side svg{
	width:30px;
	height:30px;
}

/* tabs */
.tabs{
	flex:none;
	display:flex;
	height:43px;
	background:#ccc;
}
.add{
	justify-content:center;
	width:48px;
	margin-right:8px;
}
.tab{
	display:flex;
	align-items:center;
	gap:6px;
	width:288px;
	height:39px;
	padding-left:15px;
	border-radius:0 0 8px 8px;
	background:#e8e8e8;
}
.tab.active{
	width:286px;
	height:43px;
	margin-right:5px;
	border-bottom:4px solid #1d56b3;
	border-radius:0;
	background:#fff;
}
.tab svg{
	width:27px;
	height:28px;
}
```
